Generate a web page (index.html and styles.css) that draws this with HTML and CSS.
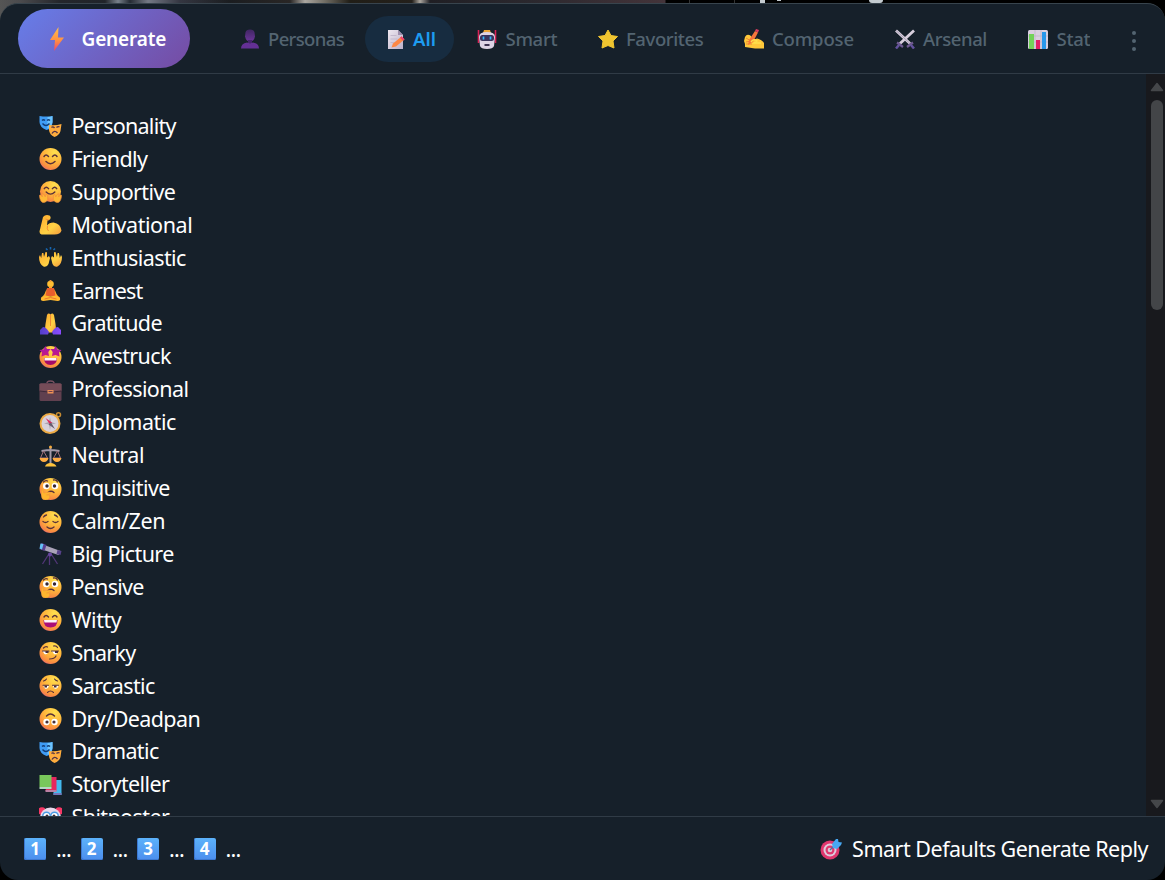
FILE: index.html
```html
<!DOCTYPE html>
<html lang="en">
<head>
<meta charset="utf-8">
<title>Generate Reply</title>
<link rel="stylesheet" href="styles.css">
</head>
<body>
<svg class="defs" aria-hidden="true">
  <defs>
    <radialGradient id="face" cx=".68" cy=".2" r=".95"><stop offset="0" stop-color="#ffe04f"/><stop offset=".5" stop-color="#ffb53b"/><stop offset=".8" stop-color="#f98a42"/><stop offset="1" stop-color="#d95a94"/></radialGradient>
    <linearGradient id="skin" x1="0" y1="0" x2="1" y2="1"><stop offset="0" stop-color="#ffa92e"/><stop offset=".6" stop-color="#ffd245"/><stop offset="1" stop-color="#f49a3c"/></linearGradient>
    <linearGradient id="bolt" x1="0" y1="0" x2="0" y2="1"><stop offset="0" stop-color="#ffc04b"/><stop offset=".55" stop-color="#ff9144"/><stop offset="1" stop-color="#ec4668"/></linearGradient>
    <linearGradient id="paper" x1="0" y1="0" x2="1" y2="1"><stop offset="0" stop-color="#eee8f1"/><stop offset="1" stop-color="#bcb0c8"/></linearGradient>
    <linearGradient id="person" x1="0" y1="0" x2="0" y2="1"><stop offset="0" stop-color="#412663"/><stop offset="1" stop-color="#6c359a"/></linearGradient>
    <linearGradient id="sleeve"><stop offset="0" stop-color="#523fc9"/><stop offset="1" stop-color="#8b4cff"/></linearGradient>
    <linearGradient id="stars" x1="0" y1="0" x2="0" y2="1"><stop offset="0" stop-color="#9d1cae"/><stop offset="1" stop-color="#ca1681"/></linearGradient>
  </defs>
  <symbol id="i-masks" viewBox="0 0 22 22">
    <path d="M0 1q7 1 13 0v7q-1 6-6 7Q0 12 0 7z" fill="#3f9cf5"/><path d="M8 2q3 0 5-1v6q-1 5-5 7z" fill="#6cc4ff"/>
    <path d="M2.500 5.500q1.500-1.500 3 0M7.500 5.500q1.500-1.500 3 0M3 8.500q3.500 4 7 0" fill="none" stroke="#123d78" stroke-width="1.300"/>
    <path d="M9.500 10q6 1 12.500-1l-1 7q-1 4-6 6-5-2-5.500-7z" fill="#ffad3e"/><path d="M12 12.500q1.500-1.500 3 .5M17 12.500q1.500-1.500 3-.5M12.500 18.500q2.500-4 5.500-.5" fill="none" stroke="#513248" stroke-width="1.400"/>
  </symbol>
  <symbol id="i-smile" viewBox="0 0 22 22"><circle cx="11" cy="11" r="11" fill="url(#face)"/><path d="M4.500 8.500q2-3 4.500 0M13 8.500q2.500-3 4.500 0M6.500 13.500q4.500 4.500 9 0" fill="none" stroke="#59313a" stroke-width="1.500" stroke-linecap="round"/></symbol>
  <symbol id="i-hug" viewBox="0 0 23 23"><circle cx="11.500" cy="11" r="11" fill="url(#face)"/><path d="M5 8q2-3 4.500 0M13.500 8q2.500-3 4.500 0M7 11.500q4.500 4.500 9 0" fill="none" stroke="#59313a" stroke-width="1.500" stroke-linecap="round"/><path d="M0 15l1-.5 2 2-.5-3 1.500 0 2 3 1-2.500 1.500.5v5q-1.500 3-5 3-3-1-3.500-7zM23 15l-1-.5-2 2 .5-3-1.500 0-2 3-1-2.500-1.500.5v5q1.500 3 5 3 3-1 3.500-7z" fill="#ffb936" stroke="#f38c3d" stroke-width=".7"/></symbol>
  <symbol id="i-arm" viewBox="0 0 22 22"><path d="M3.500 3Q6 0 10 1.500q2 1.500.5 4L8 6.500l-.5 5q2-3 6.500-3 7 1 8 8-1 4-7 4H2q-3-1-1.500-5z" fill="url(#skin)"/><path d="M6 5l3.500 1M8 12q-1 3 1 5" fill="none" stroke="#f28c35"/></symbol>
  <symbol id="i-raise" viewBox="0 0 23 22"><path d="M0 10l1-2 1.200 3L3 6l1.400 0 .6 4L6.500 5l1.500.3L8 10.500 10 9l1 2-1.500 6Q8 20.500 4.500 19.500 0 17 0 10zM23 10l-1-2-1.200 3L20 6l-1.400 0-.6 4L16.500 5l-1.500.3.0 5.200L13 9l-1 2 1.500 6q1.500 3.500 5 2.500Q23 17 23 10z" fill="url(#skin)"/><path d="M7 1.500l1.500 1.500M11.500 0v2.500M16 1.500L14.500 3" stroke="#1766b1" stroke-width="1.600"/></symbol>
  <symbol id="i-yoga" viewBox="0 0 22 22"><circle cx="11" cy="4" r="3.300" fill="#ffbe32"/><path d="M9.500 6h3v3h-3zM7 9l-2 5-3 4 2 1 4-4zM15 9l2 5 3 4-2 1-4-4z" fill="#ffab2b"/><path d="M7.500 8h7l1.500 8H6z" fill="#e85e2d"/><path d="M6 15.500q5 1.500 10 0l4 1.500q2 4-2 4l-7-1-7 1q-4 0-2-4z" fill="#ffb92f"/><path d="M5 19l6-1.500 6 1.500" fill="none" stroke="#f07830"/><circle cx="11" cy="1" r="1.100" fill="#ed973a"/></symbol>
  <symbol id="i-pray" viewBox="0 0 23 22"><path d="M8 2q1.500-2.500 3.500-.5Q13.500-.5 15 2l1.500 9 .5 5-4 3.500h-3L6 16l.5-5z" fill="url(#skin)"/><path d="M11.500 2v11" stroke="#f08a37"/><path d="M4 14q3 0 6 5l-1 2.500H1V17zM19 14q-3 0-6 5l1 2.500h8V17z" fill="url(#sleeve)"/></symbol>
  <symbol id="i-starry" viewBox="0 0 22 22"><circle cx="11" cy="11" r="11" fill="url(#face)"/><path d="M6 0l1.500 3L11 3 8.800 6l.7 4-3.500-1-4 1.500.500-4L0 4l4-.500zM16 0l2 3.500 4 .5-2.500 2.500.5 4-4-1.500L12.500 10l.7-4L11 3l3.500 0z" fill="url(#stars)"/><path d="M4.500 12h13q0 7-6.500 7t-6.500-7z" fill="#a40a68"/><path d="M5 12h12v2.500H5z" fill="#fff2f5"/></symbol>
  <symbol id="i-case" viewBox="0 0 22 22"><path d="M7.500 5q-.5-3 3.500-3t3.500 3" fill="none" stroke="#795060" stroke-width="1.500"/><rect y="4" width="22" height="18" rx="1.500" fill="#60404f"/><path d="M0 5h22v7q-11 3-22 0z" fill="#764c58"/><path d="M0 12q11 2.500 22 0" fill="none" stroke="#3c2939"/><rect x="8" y="11" width="6" height="3.500" fill="#ed9156"/><path d="M9 12.500h4" stroke="#724050"/></symbol>
  <symbol id="i-compass" viewBox="0 0 22 22"><circle cx="19" cy="2.800" r="2" fill="none" stroke="#c58a32" stroke-width="1.500"/><circle cx="10.500" cy="11.500" r="9.500" fill="#d8d1dc" stroke="#edab45" stroke-width="2"/><path d="M10.500 5l1 5 5 1.500-5 1-1 5.500-1-5.500-5-1 5-1.500z" fill="#aaa3b0"/><path d="M6 6l6.500 4.500-2 2z" fill="#df285d"/><path d="M15.500 17L9 12.500l2.500-2z" fill="#655c70"/></symbol>
  <symbol id="i-scales" viewBox="0 0 22 22"><path d="M11 2v17M2 6q6-1 9-1t9 1" fill="none" stroke="#a39aa9" stroke-width="2"/><path d="M4 6L1 13h7L4 6M18 6l-4 7h7l-3-7" fill="none" stroke="#a0717b"/><path d="M0 13h9q-1 4-4.500 4T0 13M13 13h9q-1 4-4.500 4T13 13" fill="#ffad43"/><path d="M5.500 21.500q1-3.500 5.500-3.500t6 3.500z" fill="#ffc33c"/><circle cx="11" cy="2" r="1.500" fill="#f5aa3b"/></symbol>
  <symbol id="i-think" viewBox="0 0 22 22"><circle cx="11" cy="11" r="11" fill="url(#face)"/><circle cx="6.800" cy="8" r="3.300" fill="#fff"/><circle cx="15.500" cy="8" r="3.300" fill="#fff"/><circle cx="7.500" cy="8" r="1.700" fill="#342633"/><circle cx="15" cy="8" r="1.700" fill="#342633"/><path d="M4 4q2-2 4-1M14 2q3-.5 4 2M8.500 14.500q3-2.500 6 0" fill="none" stroke="#593039" stroke-width="1.300" stroke-linecap="round"/><path d="M2 12q2-1 2 3l6-1q2 1 0 2l-3 1h3q1 5-4 5-4 0-4-4z" fill="#ffb62e" stroke="#f39a37" stroke-width=".6"/></symbol>
  <symbol id="i-calm" viewBox="0 0 22 22"><circle cx="11" cy="11" r="11" fill="url(#face)"/><path d="M3.500 10.500q2.500 2 5 0M13.500 10.500q2.500 2 5 0M7.500 16q3.500 3 7 0M4 6q1-1.500 3-2M15 4q2 .5 3 2" fill="none" stroke="#59313a" stroke-width="1.300" stroke-linecap="round"/></symbol>
  <symbol id="i-scope" viewBox="0 0 22 22"><path d="M10 10L3 21M10 10v12M11 10l7 11" stroke="#503576" stroke-width="1.300"/><circle cx="10.500" cy="11.500" r="2" fill="#6645a0"/><path d="M2 1l19 7-2 4L1 6z" fill="#aaa3b9"/><path d="M2 0l5 2-2 6-5-2z" fill="#594090"/><path d="M1 .5l3 .5-1.500 5.500-2.500-1z" fill="#65c2f5"/><path d="M18 7l4 1-1 4-4-1z" fill="#57418a"/></symbol>
  <symbol id="i-laugh" viewBox="0 0 22 22"><circle cx="11" cy="11" r="11" fill="url(#face)"/><path d="M4.500 8q2-3 4.500 0M13 8q2.500-3 4.500 0" fill="none" stroke="#59313a" stroke-width="1.400" stroke-linecap="round"/><path d="M4 11h14q0 7.500-7 7.500T4 11z" fill="#ac0c76"/><path d="M4.500 11h13l-.5 2.500H5z" fill="#fff2f7"/></symbol>
  <symbol id="i-smirk" viewBox="0 0 22 22"><circle cx="11" cy="11" r="11" fill="url(#face)"/><path d="M3 9h6q-1 4-4 3zM12.500 9h6q-1 4-4 3z" fill="#fff"/><path d="M6 9h3v2H6zM15.500 9h3v2h-3z" fill="#49303a"/><path d="M3 9h6.500M12 9h7M4 6q2-2 4-1M14 4q3-.5 4 1.500M10 17q5 0 6.500-3" fill="none" stroke="#59313a" stroke-width="1.200" stroke-linecap="round"/></symbol>
  <symbol id="i-bored" viewBox="0 0 22 22"><circle cx="11" cy="11" r="11" fill="url(#face)"/><path d="M3.500 10.500h6q-1 4-4 3zM13 10.500h6q-1 4-4 3z" fill="#fff"/><path d="M5 10.500h2.500v2H5zM14.500 10.500h2.500v2h-2.500z" fill="#49303a"/><path d="M3.500 10.300H9M13 10.300h6M4 6q2-.5 3-2M15 4q1 1.500 3 2M8 17.500q3-3 6 0" fill="none" stroke="#59313a" stroke-width="1.100" stroke-linecap="round"/></symbol>
  <symbol id="i-flip" viewBox="0 0 22 22"><circle cx="11" cy="11" r="11" fill="url(#face)"/><circle cx="7" cy="14" r="3.200" fill="#fff"/><circle cx="15" cy="14" r="3.200" fill="#fff"/><circle cx="7.500" cy="14" r="1.600" fill="#49303a"/><circle cx="14.500" cy="14" r="1.600" fill="#49303a"/><path d="M7 8q4-4 8 0" fill="none" stroke="#59313a" stroke-width="1.500" stroke-linecap="round"/></symbol>
  <symbol id="i-books" viewBox="0 0 22 22"><path d="M14 6h8v15h-8z" fill="#42b9ef"/><path d="M14 19h8v2h-8z" fill="#7676bb"/><path d="M8 3h9v14H6z" fill="#e6275e"/><path d="M6 16h11v2H6z" fill="#bb80a4"/><path d="M0 1h12v12H0z" fill="#79c85b"/><path d="M0 13h12v2H0z" fill="#b6d7c3"/></symbol>
  <symbol id="i-clown" viewBox="0 0 23 22"><circle cx="3" cy="4" r="3.800" fill="#f73866"/><circle cx="20" cy="4" r="3.800" fill="#f73866"/><circle cx="11.500" cy="11" r="10.500" fill="#e8d9ec"/><circle cx="7.500" cy="9" r="4.500" fill="#4a9be5"/><circle cx="15.500" cy="9" r="4.500" fill="#4a9be5"/><circle cx="7.500" cy="9" r="3" fill="#fff"/><circle cx="15.500" cy="9" r="3" fill="#fff"/><circle cx="8" cy="9" r="1.500" fill="#3b2832"/><circle cx="15" cy="9" r="1.500" fill="#3b2832"/></symbol>
  <symbol id="i-target" viewBox="0 0 22 22"><circle cx="10" cy="12" r="9.500" fill="#df366d"/><circle cx="10" cy="12" r="6.500" fill="#ddcbdc"/><circle cx="10" cy="12" r="4.500" fill="#df366d"/><circle cx="10" cy="12" r="2.300" fill="#d9cbd9"/><path d="M10 12l6-6" stroke="#5d6c99" stroke-width="1.500"/><path d="M12 6l4-5 2 0 .5 3 3.500.5-1 2.500-4 4-4-1z" fill="#47a7f2"/></symbol>
  <symbol id="i-bolt" viewBox="0 0 14 24"><path d="M8.500 0L0 13h5L4 24l10-13.500H8z" fill="url(#bolt)"/></symbol>
  <symbol id="i-person" viewBox="0 0 20 20"><path d="M5.500 3.500Q6 .5 10 .5t4.500 3l.5 4q-1 5-5 5T5 7.500z" fill="url(#person)"/><path d="M8 11h4v3H8z" fill="#44236c"/><path d="M1 19.500q0-5 6-6 3 1.500 6 0 6 1 6 6z" fill="#633095"/></symbol>
  <symbol id="i-memo" viewBox="0 0 20 20"><path d="M3 1h10l5 5v14H3z" fill="url(#paper)"/><path d="M13 1v5h5z" fill="#9d8fad"/><path d="M5.500 6.500h6M5.500 10h7M5.500 13.500h4" stroke="#c4b9cd"/><path d="M6.500 18.500l1.500-4 8.500-7 3 3-8.500 7z" fill="#fd8745"/><path d="M15 8.700l1.500-1.500 3 3-1.500 1.500z" fill="#ee426d"/></symbol>
  <symbol id="i-robot" viewBox="0 0 20 20"><path d="M1.500 1v13M18.500 1v13" stroke="#d92257" stroke-width="1.600"/><path d="M7 1h6l1 3H6z" fill="#eba536"/><path d="M2 8q0-5 8-5t8 5l-1 9q-1 3-7 3t-7-3z" fill="#ddd3e5"/><rect x="3" y="6" width="14" height="6" rx="2.500" fill="#39345e"/><path d="M6.500 7.500v3M13.500 7.500v3" stroke="#35b9fb" stroke-width="1.700"/><rect x="7.500" y="15" width="5" height="2" fill="#3b3150"/></symbol>
  <symbol id="i-star" viewBox="0 0 20 20"><path d="M10 1l3 5.500 6.500 1L15 12l1 7-6-2.500L4 19l1-7L.5 7.500 7 6.500z" fill="#f0c530" stroke="#f0c530" stroke-width="1" stroke-linejoin="round"/></symbol>
  <symbol id="i-write" viewBox="0 0 20 20"><path d="M1 8q2-4 6-1l2 4 4-1.500q5 1 7 4.500v5.500h-9L1 18v-3L0 12z" fill="#ffc83a"/><path d="M2 9l5 3-5 1M2 15h6" fill="none" stroke="#ee8834"/><path d="M4 16l1-5L11 2l3 1.500L9 13z" fill="#f5753c"/><path d="M11 2l1-2L15 1l-1 2.500z" fill="#dd3c60"/><path d="M7 13q3-4 6-1l-3 2h7" fill="none" stroke="#ffdf4d" stroke-width="1.500"/></symbol>
  <symbol id="i-swords" viewBox="0 0 20 20"><path d="M1 1.500l14 13M19 1.500L5 14.500" stroke="#d7cedc" stroke-width="2.800"/><path d="M1 1.500l14 13" stroke="#9f96ae" stroke-width=".8"/><path d="M2 13.500l6 4.500M18 13.500l-6 4.500" stroke="#705a92" stroke-width="2.200"/><path d="M4 16l-3 3.500M16 16l3 3.500" stroke="#62519c" stroke-width="2.500"/></symbol>
  <symbol id="i-chart" viewBox="0 0 20 20"><rect y="1" width="20" height="19" rx="1.500" fill="#dacfe0"/><path d="M0 7h20M0 13h20M7 1v19M13 1v19" stroke="#bcb1c6" stroke-width=".7"/><path d="M1 5h5v15H1z" fill="#72d259"/><path d="M8 11h4v9H8z" fill="#e11e66"/><path d="M14 3h4v17h-4z" fill="#2998eb"/></symbol>
</svg>
<div class="backdrop"><i class="sliver s1"></i><i class="sliver s2"></i><i class="sliver s3"></i><i class="sliver s4"></i><i class="sliver s5"></i></div>
<main class="panel">
  <header class="toolbar">
    <button class="generate"><svg><use href="#i-bolt"/></svg><span>Generate</span></button>
    <nav class="tabs">
      <a class="tab w-personas"><svg><use href="#i-person"/></svg><span>Personas</span></a>
      <a class="tab w-all active"><svg><use href="#i-memo"/></svg><span>All</span></a>
      <a class="tab w-smart"><svg><use href="#i-robot"/></svg><span>Smart</span></a>
      <a class="tab w-favorites"><svg><use href="#i-star"/></svg><span>Favorites</span></a>
      <a class="tab w-compose"><svg><use href="#i-write"/></svg><span>Compose</span></a>
      <a class="tab w-arsenal"><svg><use href="#i-swords"/></svg><span>Arsenal</span></a>
      <a class="tab w-stats"><svg><use href="#i-chart"/></svg><span>Stat</span></a>
    </nav>
    <div class="more"><i></i><i></i><i></i></div>
  </header>
  <section class="content">
    <ul class="list">
      <li class="tight"><svg><use href="#i-masks"/></svg>Personality</li>
      <li><svg><use href="#i-smile"/></svg>Friendly</li>
      <li><svg><use href="#i-hug"/></svg>Supportive</li>
      <li class="loose"><svg><use href="#i-arm"/></svg>Motivational</li>
      <li><svg><use href="#i-raise"/></svg>Enthusiastic</li>
      <li class="tight"><svg><use href="#i-yoga"/></svg>Earnest</li>
      <li><svg><use href="#i-pray"/></svg>Gratitude</li>
      <li><svg><use href="#i-starry"/></svg>Awestruck</li>
      <li><svg><use href="#i-case"/></svg>Professional</li>
      <li class="loose"><svg><use href="#i-compass"/></svg>Diplomatic</li>
      <li class="loose"><svg><use href="#i-scales"/></svg>Neutral</li>
      <li><svg><use href="#i-think"/></svg>Inquisitive</li>
      <li class="loose"><svg><use href="#i-calm"/></svg>Calm/Zen</li>
      <li><svg><use href="#i-scope"/></svg>Big Picture</li>
      <li class="tight"><svg><use href="#i-think"/></svg>Pensive</li>
      <li class="loose"><svg><use href="#i-laugh"/></svg>Witty</li>
      <li class="tight"><svg><use href="#i-smirk"/></svg>Snarky</li>
      <li><svg><use href="#i-bored"/></svg>Sarcastic</li>
      <li><svg><use href="#i-flip"/></svg>Dry/Deadpan</li>
      <li><svg><use href="#i-masks"/></svg>Dramatic</li>
      <li><svg><use href="#i-books"/></svg>Storyteller</li>
      <li><svg><use href="#i-clown"/></svg>Shitposter</li>
    </ul>
    <div class="scrollbar">
      <svg class="arrow" viewBox="0 0 14 10"><path d="M7 1.500L12.500 8.500h-11z"/></svg>
      <div class="thumb"></div>
      <svg class="arrow down" viewBox="0 0 14 10"><path d="M7 8.500L12.500 1.500h-11z"/></svg>
    </div>
  </section>
  <footer class="footer">
    <div class="slots">
      <span class="slot"><b>1</b>...</span><span class="slot"><b>2</b>...</span><span class="slot"><b>3</b>...</span><span class="slot"><b>4</b>...</span>
    </div>
    <div class="actions"><svg><use href="#i-target"/></svg><span>Smart Defaults Generate Reply</span></div>
  </footer>
</main>
</body>
</html>
```
FILE: styles.css
```css
* { box-sizing: border-box; }
body {
  margin: 0;
  width: 1165px;
  height: 880px;
  overflow: hidden;
  display: flex;
  flex-direction: column;
  background: #000;
  color: #fff;
  font-family: "Noto Sans", "Open Sans", sans-serif;
}
.defs { position: absolute; width: 0; height: 0; }
.backdrop {
  position: absolute;
  inset: 0 0 auto 0;
  height: 24px;
  background: linear-gradient(90deg, #555 0, #4b4b4e 20px, #24262b 60px, #20242a 105px, #77808a 118px, #252b34 130px, #747985 148px, #343641 180px, #1b1d20 230px, #292625 290px, #aaa6a0 305px, #716d64 325px, #211e17 350px, #24201b 412px, #aaa59e 420px, #201f24 430px, #2b282e 530px, #44343a 665px, #000 666px);
}
.sliver { position: absolute; top: 0; height: 3px; background: #c4cbd0; }
.s1 { left: 689px; width: 1px; background: #333; }
.s2 { left: 734px; width: 1px; background: #333; }
.s3 { left: 760px; width: 5px; }
.s4 { left: 869px; width: 14px; border-radius: 0 0 7px 7px; }
.s5 { left: 777px; width: 4px; height: 1px; }
.panel {
  position: relative;
  margin-top: 3px;
  height: 877px;
  display: flex;
  flex-direction: column;
  overflow: hidden;
  background: #16202a;
  border-top: 1px solid #38444d;
  border-radius: 18px;
}
.toolbar {
  flex: none;
  height: 70px;
  display: flex;
  align-items: flex-start;
  padding-left: 18px;
  border-bottom: 1px solid #303b46;
}
.generate {
  flex: none;
  width: 172px;
  height: 59px;
  margin: 5px 30px 0 0;
  padding: 0 0 0 32px;
  display: flex;
  align-items: center;
  gap: 17.5px;
  border: 0;
  border-radius: 30px;
  background: linear-gradient(135deg, #667eea, #764ba2);
  color: #fff;
  font: 600 19px "Noto Sans", sans-serif;
  letter-spacing: -0.15px;
}
.generate svg { width: 14px; height: 24px; }
.tabs {
  width: 870px;
  display: flex;
  gap: 3px;
  margin-top: 12px;
  overflow: hidden;
}
.tab {
  flex: none;
  height: 46px;
  padding-left: 20px;
  display: flex;
  align-items: center;
  gap: 8px;
  border-radius: 23px;
  color: #536471;
  font-size: 18.5px;
  font-weight: 500;
  letter-spacing: -0.3px;
  white-space: nowrap;
}
.tab svg { flex: none; width: 20px; height: 20px; }
.tab span { padding-bottom: 2px; }
.tab.active { background: #172c40; color: #1d9bf0; font-weight: 600; letter-spacing: 0; }
.w-personas { width: 142px; letter-spacing: -0.65px; }
.w-all { width: 89px; }
.w-smart { width: 118px; gap: 8.5px; }
.w-favorites { width: 143px; letter-spacing: -0.4px; }
.w-compose { width: 148px; letter-spacing: -0.15px; }
.w-arsenal { width: 130px; letter-spacing: -0.4px; }
.w-stats { width: 120px; gap: 8.5px; }
.more { margin: 27px 0 0 42px; display: flex; flex-direction: column; gap: 4px; }
.more i { width: 4px; height: 4px; border-radius: 50%; background: #536471; }
.content { flex: none; height: 742px; display: flex; justify-content: space-between; overflow: hidden; }
.list { list-style: none; margin: 0; padding: 35px 0 0 38.5px; }
.list li {
  height: 32.93px;
  display: flex;
  align-items: center;
  gap: 10px;
  font-size: 21.5px;
  letter-spacing: -0.6px;
  white-space: nowrap;
}
.list .tight { letter-spacing: -0.76px; }
.list .loose { letter-spacing: -0.44px; }
.list svg { flex: none; width: 23px; height: 22px; margin-top: 2px; }
.scrollbar {
  width: 19px;
  padding: 8px 0 7px 3px;
  display: flex;
  flex-direction: column;
  align-items: center;
  background: #18191d;
}
.arrow { width: 14px; height: 10px; fill: #45474a; stroke: #45474a; stroke-width: 1.5; stroke-linejoin: round; }
.thumb { width: 12px; height: 210px; margin-top: 8px; border-radius: 6px; background: #434548; }
.down { margin-top: auto; }
.footer {
  flex: 1;
  display: flex;
  justify-content: space-between;
  align-items: center;
  padding: 0 17px 0 24px;
  border-top: 1px solid #303b46;
  font-size: 21.5px;
}
.slots { display: flex; }
.slot { width: 56.5px; display: flex; align-items: center; gap: 10px; letter-spacing: -0.8px; }
.slot b {
  width: 22px;
  height: 22px;
  border-radius: 2px;
  background: linear-gradient(#5cb2fb, #4c8eed);
  box-shadow: inset 1px -1px #3c78d1;
  font: 700 17px/22px "Noto Sans", sans-serif;
  letter-spacing: 0;
  text-align: center;
}
.actions { display: flex; align-items: center; gap: 10px; letter-spacing: -0.5px; }
.actions svg { width: 22px; height: 22px; }
```
